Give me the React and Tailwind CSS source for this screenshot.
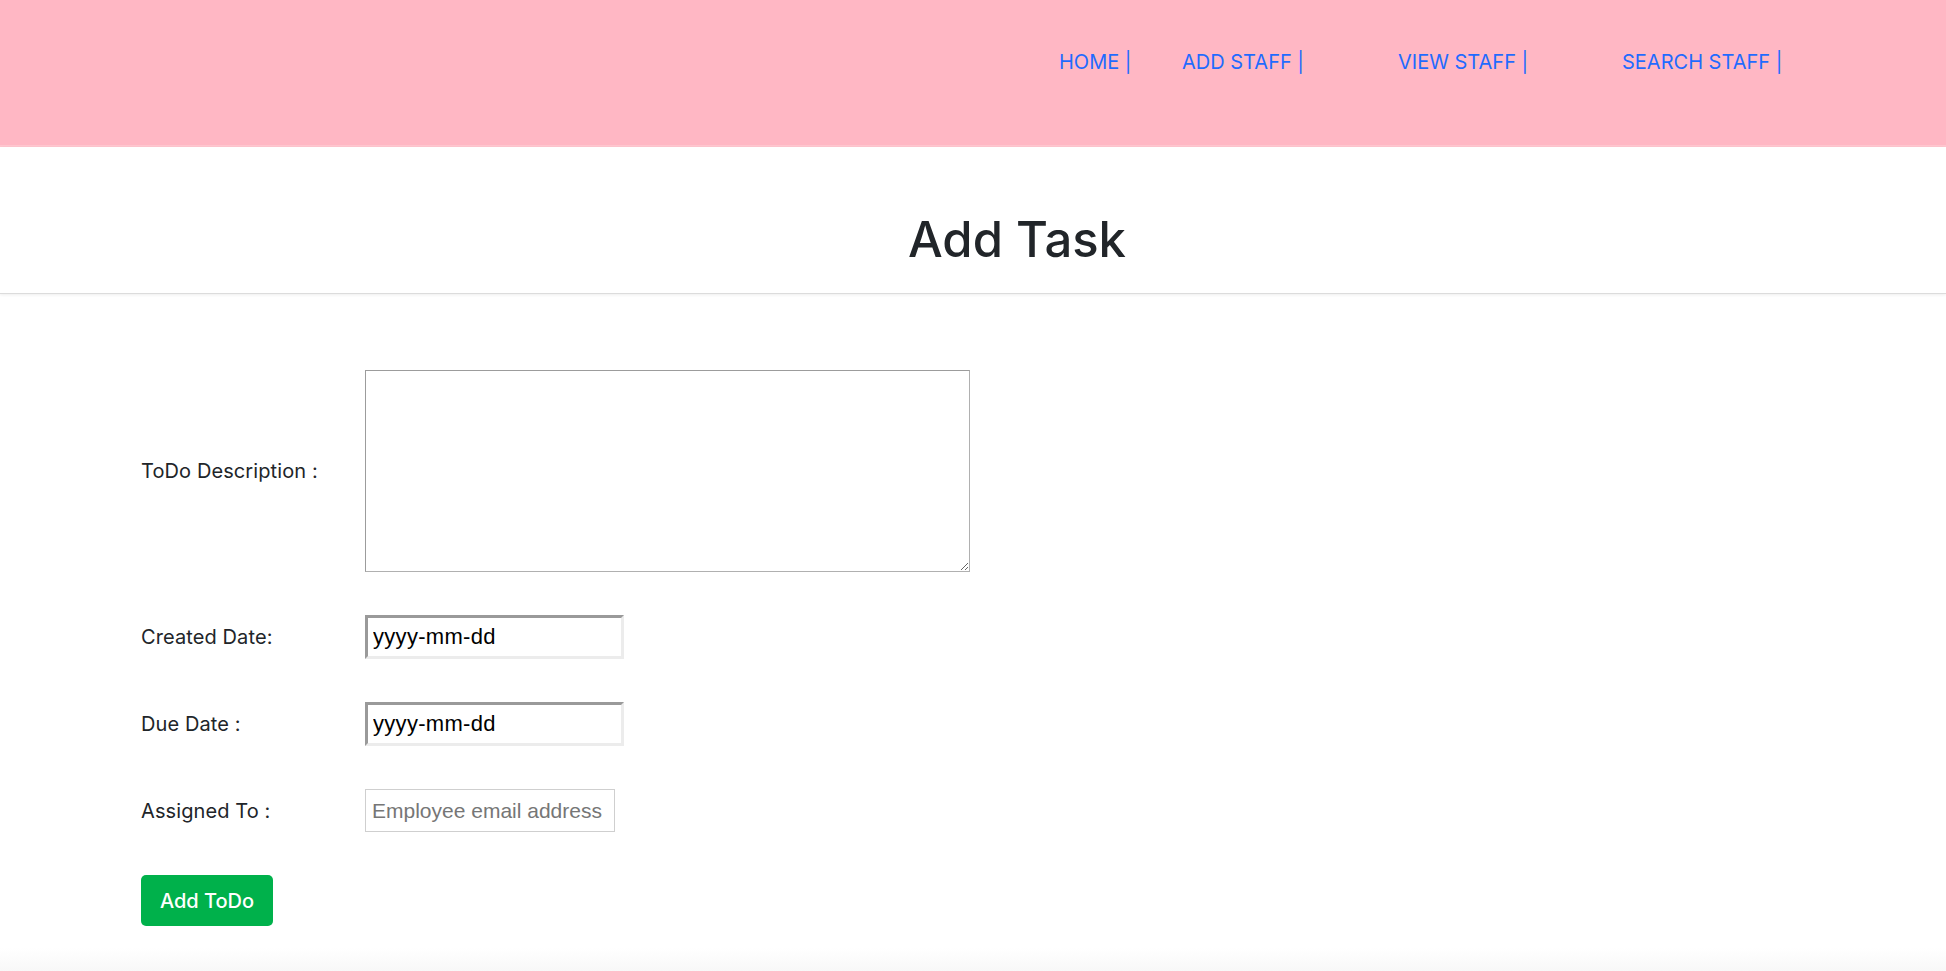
import React from "react";

const NAV_ITEMS = [
  { label: "HOME |", width: "w-[123px]" },
  { label: "ADD STAFF |", width: "w-[216px]" },
  { label: "VIEW STAFF |", width: "w-[224px]" },
  { label: "SEARCH STAFF |", width: "" },
];

const Label = ({ children }) => (
  <label className="w-[224px] shrink-0 text-[20px] tracking-[0.1px] text-[#212529]">{children}</label>
);

const DateBox = () => (
  <input
    type="text"
    readOnly
    value="yyyy-mm-dd"
    className="w-[259px] h-[44px] px-[5px] border-[3px] border-t-[#9a9a9a] border-l-[#9a9a9a] border-b-[#ececec] border-r-[#ececec] bg-white text-[22px] tracking-[0.3px] text-black outline-none font-['Liberation_Sans',Arial,sans-serif]"
  />
);

export default function App() {
  return (
    <div className="min-h-screen bg-white font-['Inter','Noto_Sans',sans-serif]">
      {/* top bar */}
      <header className="h-[147px] bg-[#ffb7c4] border-b-2 border-[#ffc6cf]">
        <nav className="flex pl-[1059px] pt-[48px]">
          {NAV_ITEMS.map(({ label, width }) => (
            <a key={label} href="#" className={`${width} text-[20px] leading-7 text-[#1f6bff]`}>
              {label}
            </a>
          ))}
        </nav>
      </header>

      {/* title */}
      <div className="pt-[63px] pb-[23px] pl-[88px] text-center border-b border-[#dcdcdc] shadow-[0_1px_3px_rgba(0,0,0,0.07)]">
        <h1 className="text-[49px] leading-[60px] font-medium text-[#212529]">Add Task</h1>
      </div>

      {/* form */}
      <form className="flex flex-col gap-[43px] pl-[141px] pt-[76px] pb-[22px]">
        <div className="flex items-center">
          <Label>ToDo Description :</Label>
          <textarea className="w-[605px] h-[202px] border border-[#9c9c9c] border-b-[#b0b0b0] border-r-[#b0b0b0] outline-none" />
        </div>
        <div className="flex items-center">
          <Label>Created Date:</Label>
          <DateBox />
        </div>
        <div className="flex items-center">
          <Label>Due Date :</Label>
          <DateBox />
        </div>
        <div className="flex items-center">
          <Label>Assigned To :</Label>
          <input
            type="text"
            placeholder="Employee email address"
            className="w-[250px] h-[43px] px-[6px] border border-[#cfcfcf] text-[21px] placeholder:text-[#767676] outline-none font-['Liberation_Sans',Arial,sans-serif]"
          />
        </div>
        <div>
          <button
            type="button"
            className="w-[132px] h-[51px] rounded-[5px] bg-[#00b14b] text-white text-[20px] font-medium"
          >
            Add ToDo
          </button>
        </div>
      </form>

      <div className="h-[30px] bg-gradient-to-b from-white to-[#f6f6f6]" />
    </div>
  );
}
